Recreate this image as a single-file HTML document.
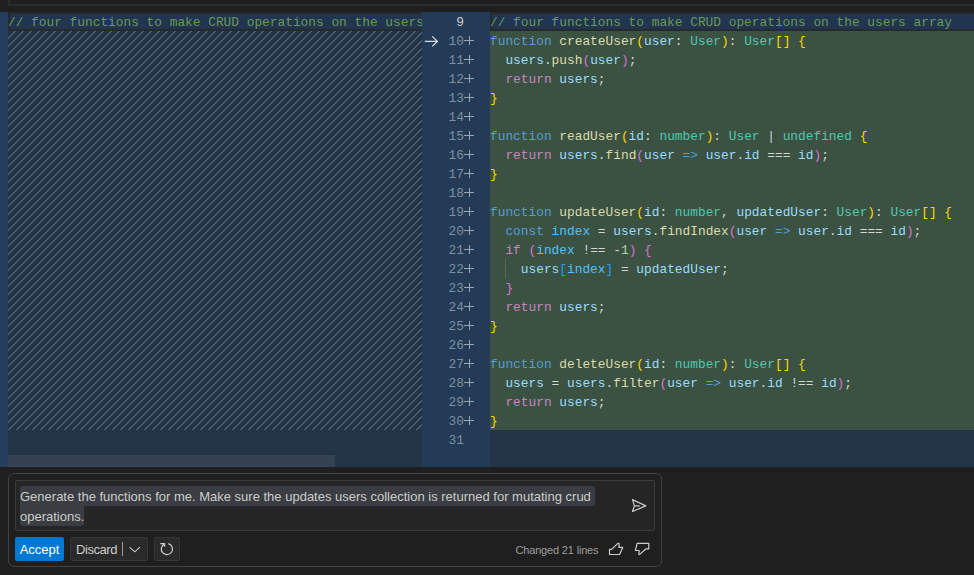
<!DOCTYPE html>
<html><head><meta charset="utf-8">
<style>
*{margin:0;padding:0;box-sizing:border-box}
html,body{width:974px;height:575px;overflow:hidden;background:#1f1f1f}
body{position:relative;font-family:"Liberation Sans",sans-serif}
.abs{position:absolute}
#topbox{left:8px;top:-4px;width:980px;height:10px;border-left:2px solid #2b2b2b;border-bottom:2px solid #2b2b2b}
#strip{left:0;top:12px;width:8px;height:455px;background:#253e5b}
#lpane{left:8px;top:12px;width:414px;height:455px;background:#233447;overflow:hidden}
#stripes{left:0;top:19px;width:414px;height:399px;
 background-image:linear-gradient(-45deg,#4b5e74 9%,transparent 9%,transparent 50%,#4b5e74 50%,#4b5e74 59%,transparent 59%,transparent 100%);
 background-size:8px 8px}
#hscroll{left:0;top:443px;width:327px;height:12px;background:#344254}
#gutter{left:422px;top:12px;width:68px;height:455px;background:#233b57}
#rpane{left:490px;top:12px;width:484px;height:455px;background:#233447;overflow:hidden}
#green{left:0;top:19px;width:484px;height:399px;background:#3b5242}
.row9{left:0;top:0;height:19px;background:#213450;border:2px solid #28292c;border-right:0}
.code{font-family:"Liberation Mono",monospace;font-size:13.5px;transform:scaleX(0.95049);transform-origin:0 0;line-height:19px;white-space:pre;color:#d4d4d4}
.ln{position:absolute;left:0;width:42px;text-align:right;color:#808e9e;font-family:"Liberation Mono",monospace;font-size:13.5px;line-height:19px;transform:scaleX(0.95049);transform-origin:100% 0}.act{color:#cccccc}
.plus{position:absolute;left:42px;width:10px;height:10px}
.plus:before{content:"";position:absolute;left:0;top:5px;width:10px;height:1px;background:#9aa6b4}
.plus:after{content:"";position:absolute;left:5px;top:0.5px;width:1px;height:9.5px;background:#9aa6b4}
.c{color:#6a9955}.k{color:#569cd6}.r{color:#c586c0}.f{color:#dcdcaa}.v{color:#9cdcfe}.t{color:#4ec9b0}
.b1{color:#ffd700}.b2{color:#da70d6}.b3{color:#179fff}.n{color:#b5cea8}.cn{color:#4fc1ff}
/* chat */
#chat{left:8px;top:473px;width:654px;height:94px;border:1px solid #424242;border-radius:6px;background:#1f1f1f}
#input{left:15px;top:480px;width:640px;height:51px;border:1px solid #3c3c3c;background:#252526;border-radius:2px}
.sel{position:absolute;background:#3a3d41;border-radius:3px}
.ctext{position:absolute;font-size:13px;line-height:20px;color:#cccccc;white-space:pre}
.btn{position:absolute;top:537px;height:24px;border-radius:2px;font-size:13px;line-height:26px;white-space:pre}
</style></head><body>
<div class="abs" id="topbox"></div>
<div class="abs" id="strip"></div>
<div class="abs" id="lpane">
  <div class="abs row9" style="width:414px"></div>
  <div class="abs code" style="left:0;top:1px"><span class="c">// four functions to make CRUD operations on the users array</span></div>
  <div class="abs" id="stripes"></div>
  <div class="abs" id="hscroll"></div>
</div>
<div class="abs" id="gutter">
  <svg class="abs" style="left:0;top:19px" width="20" height="19" viewBox="0 0 20 19"><path d="M2.8 10.4H15.6M10.2 5.4L15.4 10.4L10.2 15.4" stroke="#d4dce4" stroke-width="1.3" fill="none"/></svg><div class="ln act" style="top:1px">9</div><div class="ln" style="top:20px">10</div><div class="plus" style="top:23px"></div><div class="ln" style="top:39px">11</div><div class="plus" style="top:42px"></div><div class="ln" style="top:58px">12</div><div class="plus" style="top:61px"></div><div class="ln" style="top:77px">13</div><div class="plus" style="top:80px"></div><div class="ln" style="top:96px">14</div><div class="plus" style="top:99px"></div><div class="ln" style="top:115px">15</div><div class="plus" style="top:118px"></div><div class="ln" style="top:134px">16</div><div class="plus" style="top:137px"></div><div class="ln" style="top:153px">17</div><div class="plus" style="top:156px"></div><div class="ln" style="top:172px">18</div><div class="plus" style="top:175px"></div><div class="ln" style="top:191px">19</div><div class="plus" style="top:194px"></div><div class="ln" style="top:210px">20</div><div class="plus" style="top:213px"></div><div class="ln" style="top:229px">21</div><div class="plus" style="top:232px"></div><div class="ln" style="top:248px">22</div><div class="plus" style="top:251px"></div><div class="ln" style="top:267px">23</div><div class="plus" style="top:270px"></div><div class="ln" style="top:286px">24</div><div class="plus" style="top:289px"></div><div class="ln" style="top:305px">25</div><div class="plus" style="top:308px"></div><div class="ln" style="top:324px">26</div><div class="plus" style="top:327px"></div><div class="ln" style="top:343px">27</div><div class="plus" style="top:346px"></div><div class="ln" style="top:362px">28</div><div class="plus" style="top:365px"></div><div class="ln" style="top:381px">29</div><div class="plus" style="top:384px"></div><div class="ln" style="top:400px">30</div><div class="plus" style="top:403px"></div><div class="ln" style="top:419px">31</div>
</div>
<div class="abs" id="rpane">
  <div class="abs row9" style="width:484px"></div>
  <div class="abs" id="green"></div>
  <div class="abs" style="left:15px;top:247px;width:1px;height:19px;background:#66634a"></div>
  <div class="abs code" style="left:0;top:1px" id="rc"><span class="c">// four functions to make CRUD operations on the users array</span>
<span class="k">function</span> <span class="f">createUser</span><span class="b1">(</span><span class="v">user</span>: <span class="t">User</span><span class="b1">)</span>: <span class="t">User</span><span class="b1">[]</span> <span class="b1">{</span>
  <span class="v">users</span>.<span class="f">push</span><span class="b2">(</span><span class="v">user</span><span class="b2">)</span>;
  <span class="r">return</span> <span class="v">users</span>;
<span class="b1">}</span>

<span class="k">function</span> <span class="f">readUser</span><span class="b1">(</span><span class="v">id</span>: <span class="t">number</span><span class="b1">)</span>: <span class="t">User</span> | <span class="t">undefined</span> <span class="b1">{</span>
  <span class="r">return</span> <span class="v">users</span>.<span class="f">find</span><span class="b2">(</span><span class="v">user</span> <span class="k">=&gt;</span> <span class="v">user</span>.<span class="v">id</span> === <span class="v">id</span><span class="b2">)</span>;
<span class="b1">}</span>

<span class="k">function</span> <span class="f">updateUser</span><span class="b1">(</span><span class="v">id</span>: <span class="t">number</span>, <span class="v">updatedUser</span>: <span class="t">User</span><span class="b1">)</span>: <span class="t">User</span><span class="b1">[]</span> <span class="b1">{</span>
  <span class="k">const</span> <span class="cn">index</span> = <span class="v">users</span>.<span class="f">findIndex</span><span class="b2">(</span><span class="v">user</span> <span class="k">=&gt;</span> <span class="v">user</span>.<span class="v">id</span> === <span class="v">id</span><span class="b2">)</span>;
  <span class="r">if</span> <span class="b2">(</span><span class="cn">index</span> !== -<span class="n">1</span><span class="b2">)</span> <span class="b2">{</span>
    <span class="v">users</span><span class="b3">[</span><span class="cn">index</span><span class="b3">]</span> = <span class="v">updatedUser</span>;
  <span class="b2">}</span>
  <span class="r">return</span> <span class="v">users</span>;
<span class="b1">}</span>

<span class="k">function</span> <span class="f">deleteUser</span><span class="b1">(</span><span class="v">id</span>: <span class="t">number</span><span class="b1">)</span>: <span class="t">User</span><span class="b1">[]</span> <span class="b1">{</span>
  <span class="v">users</span> = <span class="v">users</span>.<span class="f">filter</span><span class="b2">(</span><span class="v">user</span> <span class="k">=&gt;</span> <span class="v">user</span>.<span class="v">id</span> !== <span class="v">id</span><span class="b2">)</span>;
  <span class="r">return</span> <span class="v">users</span>;
<span class="b1">}</span>
</div>
</div>
<div class="abs" id="chat"></div>
<div class="abs" id="input"></div>
<div class="sel" style="left:20px;top:486px;width:575px;height:20px;border-radius:3px 3px 3px 0"></div>
<div class="sel" style="left:20px;top:506px;width:64px;height:20px;border-radius:0 0 3px 3px"></div>
<div class="ctext" style="left:20px;top:487px">Generate the functions for me. Make sure the updates users collection is returned for mutating crud</div>
<div class="ctext" style="left:20px;top:507px">operations.</div>
<svg class="abs" style="left:626px;top:494px" width="24" height="24" viewBox="626 494 24 24"><path d="M632.5 499.6L645.8 505.9L632.5 511.5L634.4 505.9Z M634.4 505.9H639.8" stroke="#cccccc" stroke-width="1.2" fill="none" stroke-linejoin="round"/></svg>
<div class="btn" style="left:15px;width:49px;background:#0078d4;color:#fff;text-align:center">Accept</div>
<div class="btn" style="left:70px;width:78px;background:#2a2a2a;border:1px solid #353535;color:#cccccc;padding-left:5px;line-height:24px;letter-spacing:-0.45px">Discard</div>
<div class="abs" style="left:122px;top:542px;width:1px;height:14px;background:#9a9a9a"></div>
<svg class="abs" style="left:126px;top:543px" width="18" height="12" viewBox="126 543 18 12"><path d="M129.5 547.2L134.75 551.8L140 547.2" stroke="#cccccc" stroke-width="1.1" fill="none"/></svg>
<div class="btn" style="left:154px;width:26px;background:#2a2a2a;border:1px solid #353535"></div>
<svg class="abs" style="left:154px;top:537px" width="26" height="24" viewBox="154 537 26 24"><path d="M168.3 543.6A5.6 5.6 0 1 1 164.6 543.9M160.3 543.7H164.6V546.8" stroke="#cccccc" stroke-width="1.2" fill="none"/></svg>
<div class="ctext" style="left:515.5px;top:540px;font-size:11px;letter-spacing:-0.17px;color:#9d9d9d">Changed 21 lines</div>
<svg class="abs" style="left:604px;top:538px" width="50" height="22" viewBox="604 538 50 22"><g stroke="#cccccc" stroke-width="1.2" fill="none" stroke-linejoin="round"><path d="M609.5 549.4H611.6L617.6 543.6Q619.4 542.6 619.2 544.6L618.8 547.4H622.7L619.6 554.5H609.5Z"/><path d="M637.1 543.4H648.8V548.8H646.1L640 554.1Q638.6 555.2 638.9 553.6L639.2 550.5H635.4Z"/></g></svg>
</body></html>
